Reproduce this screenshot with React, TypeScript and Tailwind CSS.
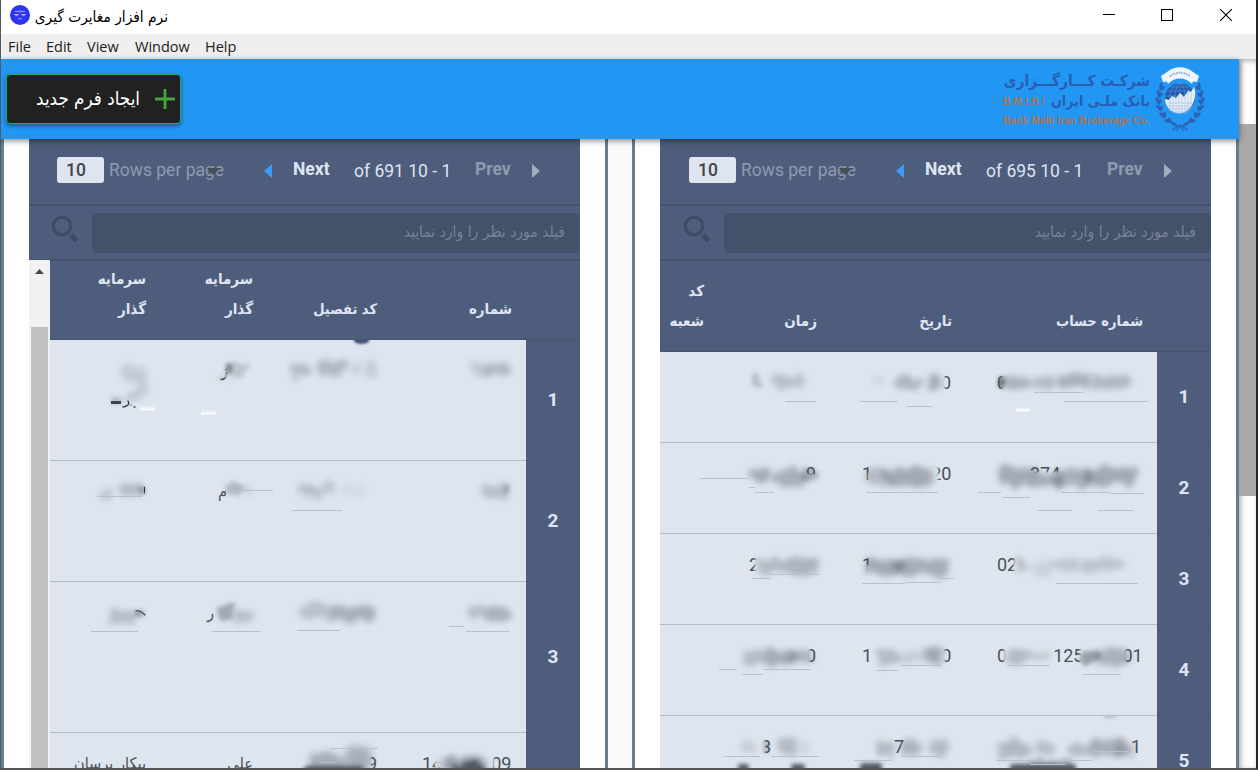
import React from "react";

type Fragment = { gap?: number; text: string };
type Cell = Fragment[];
type Smudge = [x: number, y: number, w: number, h: number, opacity: number, blur?: number];
type Stroke = [x1: number, x2: number, y: number];
type Veil = [x: number, y: number, w: number, h: number];
type Row = { index: string; height: string; cells: Cell[] };

const persian = "font-['DejaVu_Sans_Condensed','DejaVu_Sans',sans-serif] [font-stretch:condensed]";

/* ---------- Window chrome ---------- */

function TitleBar() {
  return (
    <div className="flex h-[34px] shrink-0 items-center bg-white pl-[9px]">
      <svg className="-mt-[4px] h-5 w-5 shrink-0" viewBox="0 0 20 20">
        <circle cx="10" cy="10" r="10" fill="#2b35ee" />
        <g fill="none" stroke="#c9ccff" strokeWidth="0.8" strokeLinecap="round">
          <path d="M5.500 6.400h3M11.500 6.400h3M10 5.500v2M4.800 9.500h3.600M11.600 9.500h3.600M5 9.800c.5 1.300 2.500 1.300 3 0M12 9.800c.5 1.300 2.500 1.300 3 0M8.600 13.800h2.800" />
        </g>
      </svg>
      <span dir="rtl" className={`ml-[5px] w-[133px] whitespace-nowrap text-[15.300px] text-black ${persian}`}>
        نرم افزار مغایرت گیری
      </span>
      <div className="-mt-[4px] ml-auto flex items-center gap-[46px] pr-[24px]">
        <svg className="-ml-px mr-px h-3 w-3" viewBox="0 0 12 12" shapeRendering="crispEdges">
          <path d="M0 5.500h12" stroke="#000" />
        </svg>
        <svg className="-ml-px mr-px h-3 w-3" viewBox="0 0 12 12" shapeRendering="crispEdges">
          <path d="M.5.5h11v11H.5z" stroke="#000" fill="none" />
        </svg>
        <svg className="h-3 w-3" viewBox="0 0 12 12">
          <path d="M0 0l12 12M12 0L0 12" stroke="#000" strokeWidth="1.100" />
        </svg>
      </div>
    </div>
  );
}

function MenuBar() {
  return (
    <div className="flex h-[25px] shrink-0 items-center bg-[#efefef] pl-[7px] text-[14.500px] text-[#222] font-['Open_Sans',sans-serif]">
      <span className="w-[38px]">File</span>
      <span className="w-[41px]">Edit</span>
      <span className="w-[48px]">View</span>
      <span className="w-[70px]">Window</span>
      <span>Help</span>
    </div>
  );
}

/* ---------- App header ---------- */

const leaves = [
  [7, 21, 30], [4.5, 28, 12], [3.5, 35, 0], [4.5, 42, -14], [7.5, 49, -32], [12.5, 55, -48],
];

function Emblem() {
  return (
    <svg className="h-[68px] w-[50px]" viewBox="0 0 50 68">
      <g fill="#2f62b4">
        {leaves.map(([x, y, a], i) => (
          <g key={i}>
            <ellipse cx={x - 1} cy={y} rx="1.7" ry="3.1" transform={`rotate(${a - 28} ${x} ${y})`} />
            <ellipse cx={x + 2} cy={y + 1} rx="1.6" ry="3" transform={`rotate(${a + 32} ${x} ${y})`} />
            <ellipse cx={51 - x} cy={y} rx="1.7" ry="3.1" transform={`rotate(${28 - a} ${50 - x} ${y})`} />
            <ellipse cx={48 - x} cy={y + 1} rx="1.6" ry="3" transform={`rotate(${-a - 32} ${50 - x} ${y})`} />
          </g>
        ))}
        <ellipse cx="19" cy="59" rx="4" ry="1.5" transform="rotate(28 19 59)" />
        <ellipse cx="31" cy="59" rx="4" ry="1.5" transform="rotate(-28 31 59)" />
      </g>
      <path d="M17 65l8-5 8 5M21 66l4-5 4 5" stroke="#2f62b4" fill="none" strokeWidth="1.2" />
      <circle cx="25" cy="33" r="15" fill="#2458a8" />
      <g stroke="#4f91df" strokeWidth="0.7" fill="none">
        <ellipse cx="25" cy="33" rx="5" ry="15" />
        <ellipse cx="25" cy="33" rx="10.5" ry="15" />
        <path d="M25 18v30M12 26h26M10 31h30M15 22h20" />
      </g>
      <path d="M10 34l4 1 3-4 4 2 4-5 4 4 4-6 3 1 3-5c3 8 0 18-6 23-6 4.500-13 4-18 0-3-3-5-7-5-11z" fill="#e9f1fb" />
      <path d="M12 38h27M12 41h26M14 44h22M17 47h16M15 34v12M18 32v16M21 33v16M24 30v20M27 31v18M30 31v18M33 27v20M36 27v16" stroke="#9db9dd" strokeWidth="0.6" />
      <path d="M12 7C19 .5 31 .5 38 7l6 4-2 6-4-.5-1 2.500C31 11.500 19 11.500 13 19l-1-2.500-4 .5-2-6 6-4z" fill="#eef5fd" />
      <path d="M14.500 11.500c6-5 15-5 21 0" stroke="#8fadd6" strokeWidth="2" strokeDasharray="1.500 1" fill="none" />
    </svg>
  );
}

function AppHeader() {
  return (
    <header className="relative z-10 flex h-20 shrink-0 items-start bg-[#2196f3] shadow-[0_2px_6px_rgba(0,0,0,0.450)]">
      <button className="ml-[5px] mt-[15px] flex h-[50px] w-[175px] items-center justify-end rounded-[4px] border border-[#1fae63] bg-[#212121] pr-1 shadow-[0_2px_4px_rgba(0,0,0,0.400)]">
        <span dir="rtl" className={`mr-[14px] whitespace-nowrap text-[18.700px] text-white ${persian}`}>
          ایجاد فرم جدید
        </span>
        <svg className="h-[22px] w-[22px]" viewBox="0 0 22 22">
          <path d="M11 1v20M1 11h20" stroke="#43a83a" strokeWidth="2.8" />
        </svg>
      </button>
      <div className="ml-auto mr-[34px] mt-[6px] flex items-start gap-[5px]">
        <div className="flex w-[147px] flex-col pt-[6px] text-[#2a5db2]">
          <div dir="rtl" className={`h-[20px] whitespace-nowrap text-[15.400px] font-bold leading-5 ${persian}`}>
            شرکـت کـــارگـــزاری
          </div>
          <div className="flex h-[20px] items-center justify-between whitespace-nowrap">
            <span className="text-[10px] font-bold tracking-[0.300px] text-[#b0744f] font-['Liberation_Sans',sans-serif]">B.M.I.B /</span>
            <span dir="rtl" className={`text-[14.200px] font-bold leading-5 ${persian}`}>بانک ملـی ایران</span>
          </div>
          <div className="mt-[3px] whitespace-nowrap text-[10px] font-bold leading-[14px] tracking-[0.180px] text-[#b0744f] font-['Liberation_Sans',sans-serif]">
            Bank Melli Iran Brokerage Co.
          </div>
        </div>
        <Emblem />
      </div>
    </header>
  );
}

/* ---------- Panel ---------- */

function Pagination({ total, className }: { total: string; className: string }) {
  return (
    <div className={`flex h-[67px] shrink-0 items-start border-b-2 border-[#43516c] pt-[18px] text-[17.500px] leading-[26px] text-[#dee5f2] ${className}`}>
      <div className="h-[26px] w-[47px] shrink-0 rounded-[3px] bg-[#dee5ef] pl-[9px] text-[#3f444d] font-medium">10</div>
      <div className="relative ml-[5px] w-[116px] shrink-0 whitespace-nowrap text-[#8f9aaf]">
        Rows per page
        <svg className="absolute left-[98px] top-[11px] h-[7px] w-[13px]" viewBox="0 0 13 7">
          <path d="M0 0h13L6.500 7z" fill="#454d57" />
        </svg>
      </div>
      <svg className="ml-[39px] mt-[7px] h-[14px] w-[8px]" viewBox="0 0 8 14">
        <path d="M8 0v14L0 7z" fill="#3f99f7" />
      </svg>
      <span className="ml-[21px] w-[61px] font-bold leading-[24px]">Next</span>
      <span className="w-[121px] whitespace-nowrap pt-[1px]">of {total} 10 - 1</span>
      <span className="w-[57px] font-bold leading-[24px] text-[#8f9aaf]">Prev</span>
      <svg className="mt-[7px] h-[14px] w-[8px]" viewBox="0 0 8 14">
        <path d="M0 0v14l8-7z" fill="#a4adbd" />
      </svg>
    </div>
  );
}

function SearchBar({ className }: { className: string }) {
  return (
    <div className={`flex h-[55px] shrink-0 items-start border-b-2 border-[#44526e] pt-[7px] ${className}`}>
      <svg className="mt-[2px] h-[28px] w-[28px] shrink-0" viewBox="0 0 28 28" fill="none" stroke="#3e4b64">
        <circle cx="11" cy="11" r="8.8" strokeWidth="3.2" />
        <path d="M19.500 19.500l6 6" strokeWidth="5" />
      </svg>
      <div dir="rtl" className={`ml-[13px] flex h-10 flex-1 items-center rounded-[5px] bg-[#44516b] pr-[15px] text-[15.500px] text-[#76819a] ${persian}`}>
        <span className="whitespace-nowrap">فیلد مورد نظر را وارد نمایید</span>
      </div>
    </div>
  );
}

function Redactions({ id, box, veils, smudges, strokes, highlights, children }: {
  id: string; box: string; veils: Veil[]; smudges: Smudge[]; strokes: Stroke[]; highlights: Stroke[]; children?: React.ReactNode;
}) {
  return (
    <svg className="pointer-events-none absolute left-0 top-0 h-full w-full" viewBox={box} preserveAspectRatio="xMinYMin slice">
      <defs>
        {[1, 2, 3, 4, 5].map((b) => (
          <filter key={b} id={`${id}${b}`} x="-60%" y="-100%" width="220%" height="300%">
            {b > 2 && <feTurbulence type="fractalNoise" baseFrequency="0.09" numOctaves={2} seed={4} result="n" />}
            {b > 2 && <feDisplacementMap in="SourceGraphic" in2="n" scale={14} xChannelSelector="R" yChannelSelector="G" />}
            <feGaussianBlur stdDeviation={b > 2 ? b - 0.7 : b} />
          </filter>
        ))}
      </defs>
      {veils.map(([x, y, w, h], i) => (
        <rect key={i} x={x} y={y} width={w} height={h} fill="#dbe2ec" filter={`url(#${id}1)`} />
      ))}
      {smudges.map(([x, y, w, h, o, b = 4], i) => (
        <rect key={i} x={x} y={y} width={w} height={h} rx={h / 3} fill="#4b515b" opacity={o >= 0.7 ? o : o * 0.72} filter={`url(#${id}${b})`} />
      ))}
      {strokes.map(([a, b, y], i) => (
        <path key={i} d={`M${a} ${y + 0.5}H${b}`} stroke="#b9bfcb" strokeWidth="1" />
      ))}
      {highlights.map(([a, b, y], i) => (
        <g key={i}>
          <path d={`M${a} ${y - 1}H${b}`} stroke="#eaeef5" strokeWidth="3" />
          <path d={`M${a} ${y + 0.5}H${b}`} stroke="#fff" strokeWidth="1.5" />
        </g>
      ))}
      {children}
    </svg>
  );
}

function Body({ rows, widths, children }: { rows: Row[]; widths: string[]; children: React.ReactNode }) {
  return (
    <div className="flex min-h-0 flex-1">
      <div className="relative flex-1 overflow-hidden bg-[#dee5ef]">
        {rows.map((row) => (
          <div key={row.index} className={`flex border-b border-[#b2bccf] ${row.height}`}>
            {row.cells.map((cell, i) => (
              <div key={i} className={`flex items-start pt-[15px] text-[18px] leading-[31px] text-[#4a5058] ${widths[i]}`}>
                {cell.map((f, j) => (
                  <span
                    key={j}
                    className={/[0-9]/.test(f.text) ? "whitespace-nowrap" : `ml-auto whitespace-nowrap pr-[15px] text-[16.200px] ${persian}`}
                    style={f.gap ? { marginLeft: f.gap } : undefined}
                  >
                    {f.text}
                  </span>
                ))}
              </div>
            ))}
          </div>
        ))}
        {children}
      </div>
      <div className="w-[54px] shrink-0 overflow-hidden">
        {rows.map((row) => (
          <div key={row.index} className={`flex items-center justify-center border-b border-[#4b5976] text-[19px] font-bold text-[#dee5f4] ${row.height}`}>
            {row.index}
          </div>
        ))}
      </div>
    </div>
  );
}

const headText = `text-[15px] font-bold leading-[30px] text-[#dee5f4] whitespace-nowrap ${persian}`;

const leftWidths = ["w-[111px]", "w-[107px]", "w-[124px] pl-[30px]", "w-[134px] pl-[30px]"];
const rightWidths = ["w-[59px]", "w-[113px] pl-[30px]", "w-[135px] pl-[30px]", "w-[190px] pl-[30px]"];

const leftRows: Row[] = [
  { index: "1", height: "h-[121px]", cells: [[], [{ text: "ز", gap: 60 }], [], []] },
  { index: "2", height: "h-[121px]", cells: [[], [{ text: "م", gap: 57 }], [], []] },
  { index: "3", height: "h-[151px]", cells: [[], [{ text: "ر", gap: 46 }], [], []] },
  { index: "4", height: "h-[151px]", cells: [[{ text: "پیکار پرسان" }], [{ text: "علی" }], [{ text: "9", gap: 69 }], [{ text: "14" }, { text: "09", gap: 49 }]] },
];

const rightRows: Row[] = [
  { index: "1", height: "h-[91px]", cells: [[], [], [{ text: "0", gap: 79 }], [{ text: "0" }]] },
  { index: "2", height: "h-[91px]", cells: [[], [{ text: "9", gap: 57 }], [{ text: "1" }, { text: "20", gap: 59 }], [{ text: "374", gap: 33 }]] },
  { index: "3", height: "h-[91px]", cells: [[], [{ text: "2" }], [{ text: "1" }], [{ text: "02" }]] },
  { index: "4", height: "h-[91px]", cells: [[], [{ text: "0", gap: 57 }], [{ text: "1" }, { text: "0", gap: 69 }], [{ text: "0" }, { text: "125", gap: 46 }, { text: "01", gap: 39 }]] },
  { index: "5", height: "h-[91px]", cells: [[], [{ text: "3", gap: 12 }], [{ text: "7", gap: 32 }], [{ text: "1", gap: 134 }]] },
];

const leftVeils: Veil[] = [[226, 374, 10, 10], [366, 754, 5, 14], [435, 754, 8, 14], [488, 754, 6, 14]];

const leftSmudges: Smudge[] = [
  [122, 366, 22, 13, 0.24], [136, 376, 14, 23, 0.22], [124, 392, 16, 12, 0.2, 3], [111, 397, 10, 7, 0.4, 2],
  [226, 363, 6, 11, 0.7, 2], [230, 363, 20, 12, 0.3, 3], [216, 374, 10, 8, 0.14, 3],
  [290, 363, 20, 14, 0.4], [319, 362, 26, 14, 0.42], [349, 365, 12, 8, 0.2], [366, 362, 11, 15, 0.25],
  [470, 362, 18, 13, 0.25], [486, 362, 23, 15, 0.42],
  [99, 488, 16, 12, 0.28], [120, 483, 22, 12, 0.38], [139, 486, 6, 9, 0.6, 2],
  [226, 484, 18, 12, 0.4, 3], [236, 484, 15, 10, 0.2],
  [298, 483, 15, 11, 0.35], [307, 488, 14, 11, 0.35], [320, 484, 16, 10, 0.3], [341, 485, 24, 14, 0.1],
  [481, 485, 26, 13, 0.36], [504, 485, 5, 8, 0.5, 2],
  [107, 611, 28, 13, 0.36], [134, 610, 10, 7, 0.6, 2],
  [217, 606, 16, 15, 0.55, 3], [234, 610, 18, 12, 0.34],
  [299, 604, 30, 13, 0.33], [329, 605, 45, 16, 0.5, 4], [469, 604, 19, 14, 0.38], [487, 607, 22, 14, 0.48],
  [308, 752, 36, 26, 0.5, 4], [344, 748, 26, 26, 0.52, 5], [304, 766, 60, 12, 0.95, 2],
  [442, 756, 46, 24, 0.65, 4], [452, 764, 34, 14, 0.9, 3],
];
const leftStrokes: Stroke[] = [
  [97, 142, 496], [225, 273, 490], [292, 342, 510], [91, 138, 631], [212, 260, 631], [297, 340, 630],
  [449, 464, 626], [466, 509, 631], [330, 378, 748], [320, 336, 762], [435, 446, 762],
];
const leftHighlights: Stroke[] = [[140, 155, 409], [201, 216, 413]];

const rightVeils: Veil[] = [
  [1002, 375, 8, 16], [940, 375, 5, 16],
  [1028, 472, 36, 13], [930, 466, 8, 18], [868, 473, 6, 13], [805, 474, 12, 10],
  [755, 558, 7, 16], [866, 565, 6, 10], [1014, 558, 5, 17],
  [805, 648, 5, 17], [940, 648, 5, 17], [1004, 648, 5, 17], [1080, 648, 5, 17], [1121, 648, 5, 17], [760, 740, 5, 14], [902, 744, 6, 12],
];

const rightSmudges: Smudge[] = [
  [750, 376, 11, 9, 0.35, 3], [770, 376, 34, 12, 0.36], [875, 377, 9, 9, 0.16], [895, 376, 26, 13, 0.44], [925, 374, 18, 16, 0.55],
  [998, 377, 7, 11, 0.75, 2], [1005, 377, 25, 12, 0.48], [1032, 376, 23, 12, 0.4], [1058, 374, 34, 14, 0.5], [1093, 375, 36, 14, 0.42],
  [751, 466, 18, 17, 0.55], [772, 468, 38, 18, 0.5], [802, 467, 14, 13, 0.45, 3], [865, 468, 24, 16, 0.38], [885, 468, 48, 18, 0.55],
  [998, 467, 39, 20, 0.55], [1035, 475, 30, 11, 0.5], [1054, 470, 40, 17, 0.5], [1082, 467, 56, 19, 0.55],
  [760, 558, 28, 16, 0.4], [786, 559, 31, 16, 0.45], [866, 559, 37, 16, 0.55], [896, 560, 53, 16, 0.52],
  [1015, 558, 14, 16, 0.38], [1030, 563, 22, 14, 0.18], [1052, 558, 27, 12, 0.28], [1082, 558, 44, 13, 0.3],
  [744, 650, 20, 15, 0.38], [762, 649, 34, 16, 0.52], [789, 649, 22, 16, 0.48], [877, 649, 23, 15, 0.4], [901, 651, 20, 10, 0.24], [922, 649, 21, 15, 0.58],
  [1007, 650, 20, 14, 0.4], [1025, 650, 26, 11, 0.28], [1081, 650, 20, 14, 0.65, 3], [1097, 650, 32, 15, 0.48],
  [740, 740, 15, 13, 0.2], [778, 740, 20, 15, 0.4], [797, 742, 14, 11, 0.14], [764, 741, 5, 12, 0.5, 2], [876, 741, 17, 15, 0.42], [902, 741, 21, 15, 0.45], [930, 740, 18, 15, 0.4],
  [997, 741, 32, 16, 0.42], [1033, 742, 20, 13, 0.36], [1069, 743, 26, 13, 0.42], [1092, 740, 32, 16, 0.5], [1118, 742, 15, 14, 0.42],
  [738, 764, 11, 8, 0.95, 2], [791, 764, 14, 8, 0.95, 2], [860, 763, 22, 10, 0.95, 2], [1010, 764, 66, 9, 0.95, 2], [1028, 759, 42, 7, 0.4, 3],
];
const rightStrokes: Stroke[] = [
  [785, 816, 401], [860, 898, 401], [907, 932, 406], [1034, 1083, 392], [1064, 1148, 401],
  [700, 749, 478], [749, 755, 487], [755, 774, 492], [866, 938, 492], [978, 1001, 492], [1003, 1030, 497], [1061, 1110, 492], [1110, 1144, 493], [1037, 1072, 510], [1098, 1133, 510],
  [752, 770, 578], [770, 819, 574], [862, 905, 583], [905, 941, 582], [941, 954, 578], [1056, 1138, 583],
  [719, 737, 669], [742, 763, 674], [763, 811, 669], [877, 898, 670], [901, 941, 665], [1007, 1050, 665], [1083, 1121, 674],
  [724, 760, 756], [772, 819, 756], [854, 891, 760], [902, 939, 756], [997, 1030, 760], [1061, 1092, 760], [1092, 1129, 751], [1030, 1065, 764],
];

function LeftPanel() {
  return (
    <section className="flex w-[551px] shrink-0 flex-col bg-[#4e5d7b]">
      <Pagination total="691" className="pl-[28px]" />
      <SearchBar className="pl-[22px]" />
      <div className="-mt-px flex min-h-0 flex-1">
        <div className="flex w-[21px] shrink-0 flex-col items-center bg-[#f1f1f1] pt-[9px]">
          <svg className="h-[5px] w-[9px] shrink-0" viewBox="0 0 9 5"><path d="M0 5L4.500 0 9 5z" fill="#484848" /></svg>
          <div className="mt-[53px] w-[17px] flex-1 bg-[#c1c1c1]" />
        </div>
        <div className="flex min-w-0 flex-1 flex-col">
          <div dir="ltr" className={`flex h-20 items-end border-b border-[#46546f] pb-[15px] text-right ${headText}`}>
            <div dir="rtl" className="w-[111px] pr-[15px]">سرمایه<br />گذار</div>
            <div dir="rtl" className="w-[107px] pr-[15px]">سرمایه<br />گذار</div>
            <div dir="rtl" className="w-[124px] pr-[15px] text-[14.500px]">کد تفصیل</div>
            <div dir="rtl" className="w-[134px] pr-[14px]">شماره</div>
          </div>
          <Body rows={leftRows} widths={leftWidths}>
            <Redactions id="l" box="50 340 476 428" veils={leftVeils} smudges={leftSmudges} strokes={leftStrokes} highlights={leftHighlights}>
              <ellipse cx="361.5" cy="340" rx="8" ry="4" fill="#44507a" filter="url(#l1)" />
              <path d="M111 402.500h10" stroke="#3d4250" strokeWidth="3" />
              <path d="M128 401c2 3 0 5-5 6M131 405h.01M134 407h1" stroke="#333947" strokeWidth="1.3" strokeLinecap="round" fill="none" />
              <path d="M136 611c3-1 6 1 9 4M144.500 487v6" stroke="#333947" strokeWidth="1.1" strokeLinecap="round" fill="none" />
            </Redactions>
          </Body>
        </div>
      </div>
    </section>
  );
}

function RightPanel() {
  return (
    <section className="flex w-[551px] shrink-0 flex-col bg-[#4e5d7b]">
      <Pagination total="695" className="pl-[29px]" />
      <SearchBar className="pl-[23px]" />
      <div dir="ltr" className={`flex h-[91px] shrink-0 items-end border-b border-[#46546f] pb-[15px] text-right ${headText}`}>
        <div dir="rtl" className="w-[59px] pr-[15px]">کد<br />شعبه</div>
        <div dir="rtl" className="w-[113px] pr-[15px]">زمان</div>
        <div dir="rtl" className="w-[135px] pr-[15px]">تاریخ</div>
        <div dir="rtl" className="w-[190px] pr-[14px] text-[14.500px]">شماره حساب</div>
      </div>
      <Body rows={rightRows} widths={rightWidths}>
        <Redactions id="r" box="660 352 497 416" veils={rightVeils} smudges={rightSmudges} strokes={rightStrokes} highlights={[[1016, 1030, 410]]}>
          <ellipse cx="1110" cy="717" rx="7" ry="1.5" fill="#b9bfd8" filter="url(#r1)" />
        </Redactions>
      </Body>
    </section>
  );
}

export default function App() {
  return (
    <div className="flex h-[770px] w-[1258px] flex-col overflow-hidden border-b-2 border-l border-r-2 border-b-[#555] border-l-[#4d5b66] border-r-[#262626] bg-white font-[Roboto,sans-serif]">
      <TitleBar />
      <MenuBar />
      <div className="flex min-h-0 flex-1">
        <div className="flex w-[1238px] shrink-0 flex-col">
          <AppHeader />
          <main className="flex min-h-0 flex-1 bg-[#fafafa]">
            <div className="flex w-[607px] justify-center border-x-[3px] border-[#65808c] bg-white">
              <LeftPanel />
            </div>
            <div className="w-[24px] bg-[#fafafa]" />
            <div className="flex w-[607px] justify-center border-x-[3px] border-[#65808c] bg-white">
              <RightPanel />
            </div>
          </main>
        </div>
        <div className="flex-1 bg-[#fdfdfd] pt-[65px] shadow-[inset_2px_2px_5px_rgba(0,0,0,0.300)]">
          <div className="h-[372px] bg-[#a8a8a8]" />
        </div>
      </div>
    </div>
  );
}
